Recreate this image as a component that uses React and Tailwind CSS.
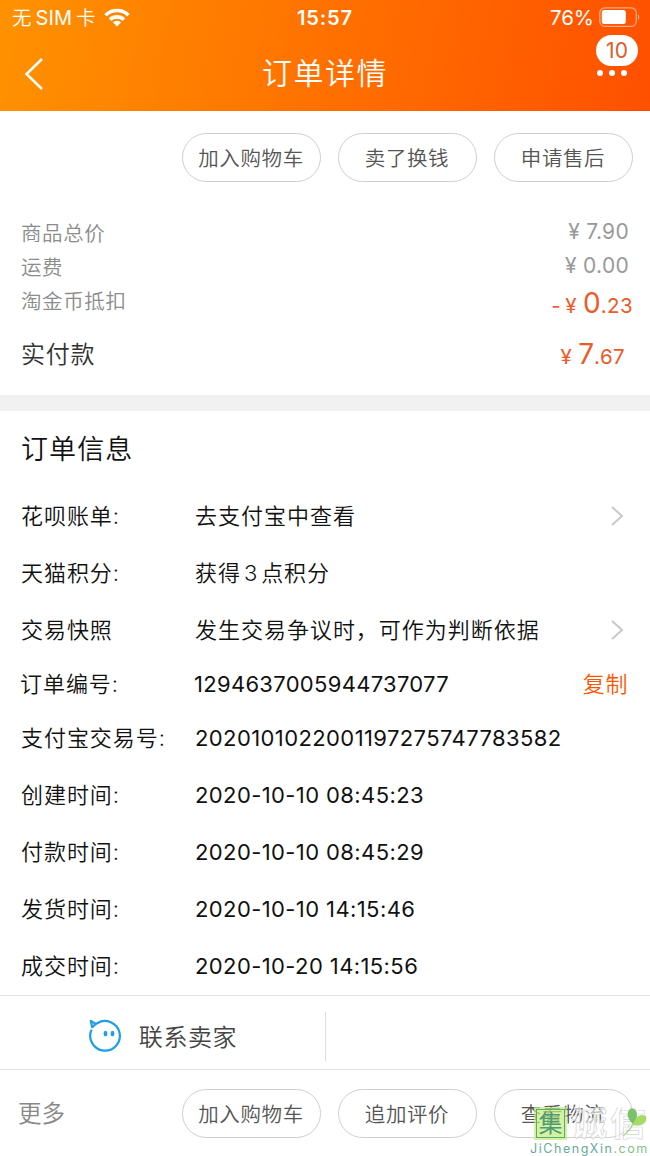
import { clsx } from "clsx";

const topActions = ["加入购物车", "卖了换钱", "申请售后"];
const bottomActions = ["加入购物车", "追加评价", "查看物流"];

const orderInfo = [
  { label: "花呗账单:", value: "去支付宝中查看", height: "h-[57px]", arrow: true },
  { label: "天猫积分:", value: "获得 3 点积分", height: "h-[57px]", spaced: true },
  { label: "交易快照", value: "发生交易争议时，可作为判断依据", height: "h-[57px]", arrow: true },
  { label: "订单编号:", value: "1294637005944737077", height: "h-[50px]", copy: true },
  { label: "支付宝交易号:", value: "2020101022001197275747783582", height: "h-[58px]", digits: true },
  { label: "创建时间:", value: "2020-10-10 08:45:23", height: "h-[57px]", digits: true },
  { label: "付款时间:", value: "2020-10-10 08:45:29", height: "h-[57px]", digits: true },
  { label: "发货时间:", value: "2020-10-10 14:15:46", height: "h-[57px]", digits: true },
  { label: "成交时间:", value: "2020-10-20 14:15:56", height: "h-[57px]", digits: true },
];

function PillButton({ children }) {
  return (
    <button className="flex h-[49px] w-[139px] items-center justify-center rounded-full border border-[#cfcfcf] pt-[3px] pr-px text-[20.5px] tracking-[0.6px] whitespace-nowrap text-[#555]">
      {children}
    </button>
  );
}

function Wifi() {
  return (
    <svg className="-mt-px ml-[8px] h-[19px] w-[26px]" viewBox="0 0 26 19" fill="none" stroke="#fff" strokeWidth="3.6">
      <path d="M1.5 7.2C8 .9 18 .9 24.5 7.2" />
      <path d="M6 11.6C10 8 16 8 20 11.6" />
      <path d="M13 18.5L8.8 14.3C11.2 12.2 14.8 12.2 17.2 14.3Z" fill="#fff" stroke="none" />
    </svg>
  );
}

function Battery() {
  return (
    <svg className="-mt-[2px] ml-[5px] h-[20px] w-[41px]" viewBox="0 0 41 20" fill="none">
      <rect x="0.8" y="0.8" width="36.5" height="18.5" rx="5" stroke="#fff" strokeOpacity="0.5" strokeWidth="1.3" />
      <rect x="2.8" y="3" width="24" height="14" rx="2.5" fill="#fff" />
      <path d="M39 7.2C40.6 8 40.6 12 39 12.8Z" fill="#fff" fillOpacity="0.6" />
    </svg>
  );
}

function Header() {
  return (
    <header className="relative h-[111px] bg-[linear-gradient(100deg,#ff9200_0%,#ff7400_45%,#ff5000_100%)] text-white">
      <div className="grid h-9 grid-cols-3 items-center">
        <div className="flex items-center pl-[12px] text-[19.5px]">
          <span className="pt-px">无</span>
          <span className="ml-[4px] text-[20px] font-normal tracking-[0.1px]">SIM</span>
          <span className="ml-[4px] pt-px">卡</span>
          <Wifi />
        </div>
        <div className="text-center text-[20px] font-semibold tracking-[0.9px]">15:57</div>
        <div className="flex items-center justify-end pr-[10px] text-[20.5px] font-normal">
          76%
          <Battery />
        </div>
      </div>
      <div className="flex h-[75px] items-center">
        <svg className="ml-[24px] h-8 w-5" viewBox="0 0 20 32" fill="none" stroke="#fff" strokeWidth="2.5">
          <path d="M18 1L2.5 16L18 31" />
        </svg>
        <h1 className="-ml-[44px] flex-1 text-center text-[30px] tracking-[1.5px]">订单详情</h1>
      </div>
      <div className="absolute top-[35px] left-[596px] flex h-[31px] w-[42px] items-center justify-center rounded-full bg-white text-[21px] font-normal text-[#e0592a]">
        10
      </div>
      <div className="absolute top-[70px] left-[597px] flex gap-[6px]">
        <i className="size-[6px] rounded-full bg-white" />
        <i className="size-[6px] rounded-full bg-white" />
        <i className="size-[6px] rounded-full bg-white" />
      </div>
    </header>
  );
}

function PriceSummary() {
  return (
    <section className="h-[213px] pt-[34px] pl-[21px] text-[20.5px] tracking-[0.6px] text-[#8c8c8c]">
      <div className="flex h-[34px] items-center justify-between pr-[21px]">
        <span className="pt-[3px]">商品总价</span>
        <span className="-mt-[3px] text-[21px] font-normal tracking-[0.3px] text-[#999]">¥ 7.90</span>
      </div>
      <div className="flex h-[34px] items-center justify-between pr-[21px]">
        <span className="pt-[3px]">运费</span>
        <span className="-mt-[3px] text-[21px] font-normal tracking-[0.3px] text-[#999]">¥ 0.00</span>
      </div>
      <div className="flex h-[34px] items-center justify-between pr-[17px]">
        <span className="pt-[3px]">淘金币抵扣</span>
        <span className="pt-[3px] font-normal tracking-[0.4px] text-[#ee5a28]">
          <span className="mr-[4px]">-</span>¥ <span className="text-[28px] tracking-normal">0</span>.23
        </span>
      </div>
      <div className="mt-[9px] flex h-[54px] items-center justify-between pr-[25px]">
        <span className="pt-[2px] text-[24px] tracking-[0.7px] text-[#333]">实付款</span>
        <span className="font-normal tracking-[0.4px] text-[#ee5a28]">
          ¥ <span className="text-[28px] tracking-normal">7</span>.67
        </span>
      </div>
    </section>
  );
}

function InfoRow({ row }) {
  return (
    <div className={clsx("flex items-center pr-[22px] whitespace-nowrap", row.copy ? "pl-[20px]" : "pl-[21px]", row.height)}>
      <span className="w-[174px] tracking-[0.95px]">{row.label}</span>
      <span
        className={clsx(
          "flex-1",
          row.digits && "font-normal tracking-[0.4px]",
          row.copy && "font-normal tracking-[0.3px]",
          row.spaced && "tracking-[0.9px] [word-spacing:-4px]",
          row.arrow && "tracking-[0.98px]"
        )}
      >
        {row.value}
      </span>
      {row.copy && <span className="tracking-[0.6px] text-[#ff5500]">复制</span>}
      {row.arrow && (
        <svg className="mt-[-2px] mr-[4px] h-[20px] w-[14px]" viewBox="0 0 14 20" fill="none" stroke="#c8c8c8" strokeWidth="2">
          <path d="M2 1L12 10L2 19" />
        </svg>
      )}
    </div>
  );
}

function SellerIcon() {
  return (
    <svg className="h-[34px] w-[34px]" viewBox="0 0 34 34" fill="none" stroke="#1c9fe5" strokeWidth="2.2" strokeLinejoin="round">
      <path d="M3.6 10.6A14.8 14.8 0 1 0 9.3 4.2L7.9 4.9L2.8 2L4.2 8.2L7.9 4.9" />
      <ellipse cx="17.5" cy="14.500" rx="1.900" ry="2.700" fill="#1c9fe5" stroke="none" />
      <ellipse cx="24.5" cy="14.500" rx="1.900" ry="2.700" fill="#1c9fe5" stroke="none" />
    </svg>
  );
}

function Watermark() {
  return (
    <div className="absolute top-[1107px] left-[530px] w-[120px] font-normal">
      <div className="ml-[4px] flex h-[34px] items-start">
        <span className="flex size-[33px] shrink-0 items-center justify-center bg-[#c3ec7c]/70 text-[24px] leading-none text-[#4d9a78]">
          <span className="flex size-[29px] items-center justify-center border-[1.5px] border-[#5da874]">集</span>
        </span>
        <svg className="ml-[2px] h-[36px] w-[80px] shrink-0" viewBox="0 0 80 36">
          <text x="2" y="29" fontSize="36" fontWeight="700" fill="#fff" fillOpacity="0.6" stroke="#d4d4d4" strokeWidth="0.7" textLength="75">
            诚信
          </text>
          <path d="M54 29C59 25 64 20 65 13" stroke="#a6d98a" strokeWidth="1.5" fill="none" />
          <path d="M64 17C56 10 58 3 63 1C69 3 70 11 64 17Z" fill="#78c26a" />
          <path d="M64 18C66 9 72 6 77 9C79 15 73 20 64 18Z" fill="#a9da65" />
        </svg>
      </div>
      <div className="-mt-px pb-[2px] text-[12.5px] leading-[18px] tracking-[1.55px] whitespace-nowrap">
        <span className="text-[#65ab98]">JiChengXin</span>
        <span className="text-[#7fc37f]">.com</span>
      </div>
    </div>
  );
}

export default function App() {
  return (
    <div className="relative flex h-[1156px] w-[650px] flex-col overflow-hidden bg-white font-['Inter','Noto_Sans_CJK_SC',sans-serif] font-[350]">
      <Header />
      <div className="flex h-[71px] items-end justify-end gap-[17px] pr-[17px]">
        {topActions.map((action) => (
          <PillButton key={action}>{action}</PillButton>
        ))}
      </div>
      <PriceSummary />
      <div className="h-[16px] bg-[#f1f1f1]" />
      <section className="text-[22px] text-[#111]">
        <h2 className="flex h-[77px] items-center pt-[2px] pl-[21px] text-[27px] tracking-[1.1px]">订单信息</h2>
        {orderInfo.map((row) => (
          <InfoRow key={row.label} row={row} />
        ))}
      </section>
      <div className="flex h-[75px] shrink-0 items-center border-y border-[#e2e2e2]">
        <div className="flex w-[325px] items-center justify-center pt-[8px] pb-px">
          <SellerIcon />
          <span className="ml-[17px] pt-[4px] text-[24px] tracking-[0.6px] text-[#444]">联系卖家</span>
        </div>
        <div className="mt-[8px] h-[49px] w-px bg-[#dedede]" />
      </div>
      <footer className="flex items-start gap-[17px] pt-[19px] pr-[17px] pl-[18px]">
        <span className="mr-auto pt-[7px] text-[23.5px] text-[#888]">更多</span>
        {bottomActions.map((action) => (
          <PillButton key={action}>{action}</PillButton>
        ))}
      </footer>
      <Watermark />
    </div>
  );
}
